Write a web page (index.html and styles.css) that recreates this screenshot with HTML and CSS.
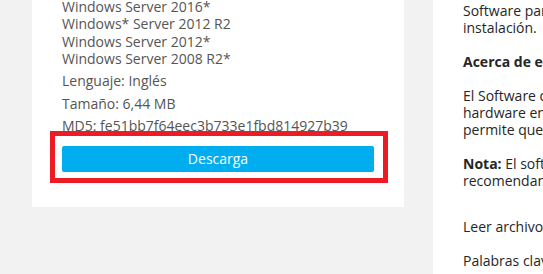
FILE: index.html
```html
<!DOCTYPE html>
<html lang="es">
<head>
    <meta charset="UTF-8">
    <meta name="viewport" content="width=device-width, initial-scale=1.0">
    <title>Descarga del controlador</title>
    <link rel="stylesheet" href="styles.css">
</head>
<body>
    <div class="page">
        <div class="download-card">
            <ul class="os-list">
                <li>Windows Server 2016*</li>
                <li>Windows* Server 2012 R2</li>
                <li>Windows Server 2012*</li>
                <li>Windows Server 2008 R2*</li>
            </ul>

            <p class="meta">Lenguaje: Inglés</p>
            <p class="meta">Tamaño: 6,44 MB</p>
            <p class="meta">MD5: fe51bb7f64eec3b733e1fbd814927b39</p>

            <div class="highlight">
                <a class="download-btn" href="#">Descarga</a>
            </div>
        </div>

        <div class="details">
            <p>Software para la configuración de los controladores y la<br>instalación.</p>
            <p class="details-title">Acerca de este software</p>
            <p>El Software de controlador detecta y configura el<br>hardware en el sistema y, a continuación,<br>permite que el sistema operativo lo utilice.</p>
            <p><b>Nota:</b> El software de Intel que se encuentra aquí<br>recomendando por su fabricante.</p>
            <p class="details-links">Leer archivos de licencia</p>
            <p>Palabras clave</p>
        </div>
    </div>
</body>
</html>
```

FILE: styles.css
```css
* {
    margin: 0;
    padding: 0;
    box-sizing: border-box;
}

html, body {
    overflow: hidden;
}

body {
    background-color: #f2f2f2;
    font-family: 'Open Sans', 'Noto Sans', sans-serif;
    font-size: 14px;
}

.page {
    display: flex;
    align-items: flex-start;
    margin-top: -2px;
    padding-left: 32px;
    gap: 29px;
}

/* left card */
.download-card {
    flex: 0 0 372px;
    background-color: #fff;
    padding: 0 30px 24px;
    color: #555;
}

.os-list {
    list-style: none;
    line-height: 17.3px;
    margin-bottom: 3px;
}

.meta {
    line-height: 22.5px;
    white-space: nowrap;
}

.highlight {
    position: relative;
    margin: -7px -14px 0 -12px;
    padding: 10px 9px 6px 7px;
    border: 5px solid #ed1c24;
    background-color: #fff;
}

.download-btn {
    display: block;
    height: 26px;
    line-height: 26px;
    background-color: #00aeef;
    color: #fff;
    text-align: center;
    text-decoration: none;
    border-radius: 2px;
}

/* right column */
.details {
    flex: 0 0 400px;
    background-color: #fff;
    padding: 4px 0 40px 30px;
    color: #262626;
    line-height: 17px;
    white-space: nowrap;
}

.details p {
    margin-bottom: 17px;
}

.details-title {
    font-weight: bold;
}

.details-links {
    margin-top: 29px;
}
```
